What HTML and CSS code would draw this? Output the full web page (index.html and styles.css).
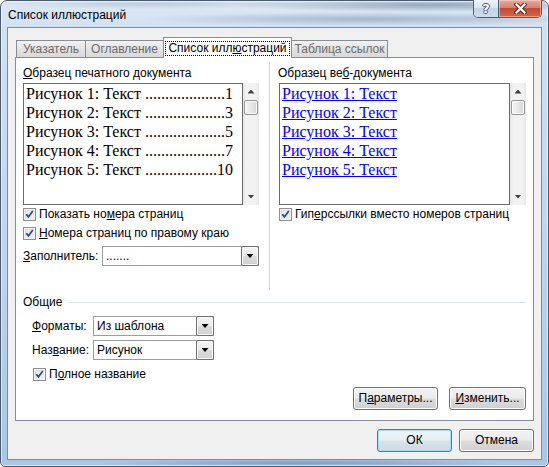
FILE: index.html
```html
<!DOCTYPE html>
<html lang="ru">
<head>
<meta charset="utf-8">
<title>Список иллюстраций</title>
<link rel="stylesheet" href="styles.css">
</head>
<body>
<div class="window">
  <div class="titlebar">
    <span class="title">Список иллюстраций</span>
    <div class="caption-btns">
      <div class="cap-help">?</div>
      <div class="cap-close">
        <svg width="13" height="11" viewBox="0 0 13 11"><path d="M2.5 1.5 L10.5 9.5 M10.5 1.5 L2.5 9.5" stroke="#5a2a22" stroke-width="4.2" stroke-linecap="square"/><path d="M2.5 1.5 L10.5 9.5 M10.5 1.5 L2.5 9.5" stroke="#ffffff" stroke-width="2.2" stroke-linecap="square"/></svg>
      </div>
    </div>
  </div>
  <div class="client">
    <div class="tabs">
      <div class="tab t1">Указатель</div>
      <div class="tab t2">Оглавление</div>
      <div class="tab t3 active"><span class="focus">Список илл<u>ю</u>страций</span></div>
      <div class="tab t4">Таблица ссылок</div>
    </div>
    <div class="panel">
      <div class="top">
        <div class="col left">
          <div class="lbl"><u>О</u>бразец печатного документа</div>
          <div class="preview">
            <div class="pbox print">
              <div class="line"><span>Рисунок 1: Текст</span><span class="dots">....................</span><span>1</span></div>
              <div class="line"><span>Рисунок 2: Текст</span><span class="dots">....................</span><span>3</span></div>
              <div class="line"><span>Рисунок 3: Текст</span><span class="dots">....................</span><span>5</span></div>
              <div class="line"><span>Рисунок 4: Текст</span><span class="dots">....................</span><span>7</span></div>
              <div class="line"><span>Рисунок 5: Текст</span><span class="dots">..................</span><span>10</span></div>
            </div>
            <div class="vscroll">
              <div class="sb-btn"><span class="arr-up"></span></div>
              <div class="thumb"></div>
              <div class="sb-space"></div>
              <div class="sb-btn"><span class="arr-down"></span></div>
            </div>
          </div>
          <div class="chk">
            <svg class="cb" width="13" height="13" viewBox="0 0 13 13"><rect x="0.5" y="0.5" width="12" height="12" fill="#f6f6f6" stroke="#8f8f8f"/><rect x="2" y="2" width="9" height="9" fill="#dcdcdc"/><rect x="3" y="3" width="8" height="8" fill="#ebebeb"/><path d="M3.3 6.3 L5.4 8.9 L9.8 2.9" stroke="#2f4389" stroke-width="1.7" fill="none"/></svg>
            <span>Показать но<u>м</u>ера страниц</span>
          </div>
          <div class="chk">
            <svg class="cb" width="13" height="13" viewBox="0 0 13 13"><rect x="0.5" y="0.5" width="12" height="12" fill="#f6f6f6" stroke="#8f8f8f"/><rect x="2" y="2" width="9" height="9" fill="#dcdcdc"/><rect x="3" y="3" width="8" height="8" fill="#ebebeb"/><path d="M3.3 6.3 L5.4 8.9 L9.8 2.9" stroke="#2f4389" stroke-width="1.7" fill="none"/></svg>
            <span><u>Н</u>омера страниц по правому краю</span>
          </div>
          <div class="field fill">
            <span class="flabel"><u>З</u>аполнитель:</span>
            <div class="combo wide"><span class="cval">.......</span><span class="drop"><span class="arr-down"></span></span></div>
          </div>
        </div>
        <div class="sep"></div>
        <div class="col right">
          <div class="lbl">Образец ве<u>б</u>-документа</div>
          <div class="preview shift">
            <div class="pbox web">
              <div class="line"><span class="link">Рисунок 1: Текст</span></div>
              <div class="line"><span class="link">Рисунок 2: Текст</span></div>
              <div class="line"><span class="link">Рисунок 3: Текст</span></div>
              <div class="line"><span class="link">Рисунок 4: Текст</span></div>
              <div class="line"><span class="link">Рисунок 5: Текст</span></div>
            </div>
            <div class="vscroll">
              <div class="sb-btn"><span class="arr-up"></span></div>
              <div class="thumb"></div>
              <div class="sb-space"></div>
              <div class="sb-btn"><span class="arr-down"></span></div>
            </div>
          </div>
          <div class="chk shift">
            <svg class="cb" width="13" height="13" viewBox="0 0 13 13"><rect x="0.5" y="0.5" width="12" height="12" fill="#f6f6f6" stroke="#8f8f8f"/><rect x="2" y="2" width="9" height="9" fill="#dcdcdc"/><rect x="3" y="3" width="8" height="8" fill="#ebebeb"/><path d="M3.3 6.3 L5.4 8.9 L9.8 2.9" stroke="#2f4389" stroke-width="1.7" fill="none"/></svg>
            <span>Гип<u>е</u>рссылки вместо номеров страниц</span>
          </div>
        </div>
      </div>
      <div class="group">
        <div class="ghead"><span>Общие</span><div class="gline"></div></div>
        <div class="gbody">
          <div class="field row1">
            <span class="flabel short"><u>Ф</u>орматы:</span>
            <div class="combo narrow"><span class="cval">Из шаблона</span><span class="drop"><span class="arr-down"></span></span></div>
          </div>
          <div class="field row2">
            <span class="flabel short">Наз<u>в</u>ание:</span>
            <div class="combo narrow"><span class="cval">Рисунок</span><span class="drop"><span class="arr-down"></span></span></div>
          </div>
          <div class="chk full">
            <svg class="cb" width="13" height="13" viewBox="0 0 13 13"><rect x="0.5" y="0.5" width="12" height="12" fill="#f6f6f6" stroke="#8f8f8f"/><rect x="2" y="2" width="9" height="9" fill="#dcdcdc"/><rect x="3" y="3" width="8" height="8" fill="#ebebeb"/><path d="M3.3 6.3 L5.4 8.9 L9.8 2.9" stroke="#2f4389" stroke-width="1.7" fill="none"/></svg>
            <span>П<u>о</u>лное название</span>
          </div>
        </div>
      </div>
      <div class="btnrow">
        <div class="btn b-param">П<u>а</u>раметры...</div>
        <div class="btn b-edit"><u>И</u>зменить...</div>
      </div>
    </div>
    <div class="dlgbtns">
      <div class="btn b-dlg default">ОК</div>
      <div class="btn b-dlg">Отмена</div>
    </div>
  </div>
</div>
</body>
</html>
```

FILE: styles.css
```css
* { box-sizing: border-box; }
html, body { margin: 0; padding: 0; }
body {
  width: 549px;
  height: 467px;
  overflow: hidden;
  font-family: "Liberation Sans", "Noto Sans", sans-serif;
  font-size: 12px;
  color: #000;
  background: #fff;
}
u { text-decoration: underline; text-underline-offset: 1px; }

.window {
  width: 549px;
  height: 467px;
  border: 1px solid #4a5a6e;
  border-radius: 7px 7px 5px 5px;
  padding: 0 6px 6px 6px;
  display: flex;
  flex-direction: column;
  box-shadow: inset 0 0 0 1px rgba(255,255,255,0.55);
  background:
    radial-gradient(ellipse 200px 7px at 430px 4px, rgba(70,90,120,0.45), rgba(70,90,120,0)),
    radial-gradient(ellipse 230px 7px at 370px 18px, rgba(70,90,120,0.32), rgba(70,90,120,0)),
    radial-gradient(ellipse 160px 5px at 150px 3px, rgba(90,110,140,0.22), rgba(90,110,140,0)),
    radial-gradient(ellipse 200px 4px at 300px 462px, rgba(40,80,140,0.35), rgba(40,80,140,0)),
    linear-gradient(180deg, #dde8f4 0px, #d2e1f1 26px, #bcd3eb 60%, #a9c6e6 100%);
}

.titlebar {
  height: 26px;
  display: flex;
  align-items: flex-start;
}
.title {
  margin-left: 1px;
  padding-top: 6px;
  line-height: 16px;
  flex: 1;
}
.caption-btns {
  margin-top: -1px;
  display: flex;
  height: 18px;
  border: 1px solid #4f5d70;
  border-top: none;
  border-radius: 0 0 5px 5px;
  overflow: hidden;
}
.cap-help {
  width: 25px;
  border-right: 1px solid #4f5d70;
  background: linear-gradient(180deg, #eef3f8 0%, #dbe5ef 45%, #c4d4e5 50%, #cfdcea 100%);
  color: #fff;
  font-family: "DejaVu Sans", sans-serif;
  font-weight: bold;
  font-size: 13px;
  line-height: 17px;
  text-align: center;
  text-shadow: 1px 0 0 #4a5566, -1px 0 0 #4a5566, 0 1px 0 #4a5566, 0 -1px 0 #4a5566;
}
.cap-close {
  width: 42px;
  display: flex;
  align-items: center;
  justify-content: center;
  background: linear-gradient(180deg, #e9ab9d 0%, #d8806c 45%, #c44a31 50%, #cf6a4e 100%);
  box-shadow: inset 0 0 0 1px rgba(255,220,210,0.5);
}

.client {
  height: 433px;
  border: 1px solid #808c9b;
  background: #f0f0f0;
  padding: 0 7px;
  display: flex;
  flex-direction: column;
}

/* tabs */
.tabs {
  height: 29px;
  padding-top: 9px;
  padding-left: 1px;
  display: flex;
  align-items: flex-end;
}
.tab {
  height: 17px;
  border: 1px solid #898c95;
  border-bottom: none;
  background: linear-gradient(180deg, #f2f2f2 0%, #e4e4e4 50%, #d9d9d9 100%);
  color: #6a6a6a;
  text-align: center;
  line-height: 15px;
  padding-top: 1px;
  white-space: nowrap;
}
.t1 { width: 70px; }
.t2 { width: 79px; margin-left: -1px; }
.t3 { width: 129px; margin-left: -1px; }
.t4 { width: 97px; margin-left: -1px; }
.tab.active {
  height: 21px;
  margin-bottom: -1px;
  background: #fff;
  color: #000;
  position: relative;
  z-index: 1;
  padding-top: 3px;
}
.focus {
  display: inline-block;
  border: 1px dotted #000;
  line-height: 13px;
  padding: 0 2px;
}

/* panel */
.panel {
  height: 364px;
  border: 1px solid #898c95;
  background: #fff;
  padding: 0 7px;
  display: flex;
  flex-direction: column;
}
.top {
  margin-top: 4px;
  height: 228px;
  display: flex;
}
.col { padding-top: 4px; }
.col.left { width: 236px; }
.col.right { width: 248px; }
.sep {
  width: 1px;
  background: #cfd6dd;
  margin: 0 8px 0 10px;
}
.lbl {
  line-height: 15px;
  height: 15px;
  white-space: nowrap;
}
.preview {
  margin-top: 2px;
  height: 122px;
  display: flex;
}
.preview.shift { margin-left: 1px; }
.pbox {
  border: 1px solid #6a6a6a;
  background: #fff;
  font-family: "Liberation Serif", "Times New Roman", serif;
  font-size: 16px;
  line-height: 19px;
  padding: 0 9px 0 2px;
}
.pbox.print { width: 220px; }
.pbox.web { width: 231px; }
.line {
  display: flex;
  white-space: nowrap;
}
.dots {
  flex: 1;
  text-align: right;
}
.link {
  color: #0000ff;
  text-decoration: underline;
}

/* scrollbar */
.vscroll {
  width: 16px;
  display: flex;
  flex-direction: column;
  background: linear-gradient(90deg, #e6e6e6 0%, #f2f2f2 20%, #f2f2f2 80%, #e6e6e6 100%);
}
.sb-btn {
  height: 17px;
  display: flex;
  align-items: center;
  justify-content: center;
}
.sb-space { flex: 1; }
.thumb {
  height: 15px;
  margin: 0 1px;
  border: 1px solid #979797;
  border-radius: 2px;
  background: linear-gradient(90deg, #f4f4f4 0%, #e8e8e8 50%, #d6d6d6 100%);
  box-shadow: inset 0 0 0 1px #fbfbfb;
}
.arr-up, .arr-down {
  display: block;
  width: 7px;
  height: 4px;
  background: #404040;
}
.arr-up { clip-path: polygon(50% 0, 100% 100%, 0 100%); }
.arr-down { clip-path: polygon(0 0, 100% 0, 50% 100%); }
.drop .arr-down { background: #000; }

/* checkboxes */
.chk {
  height: 19px;
  display: flex;
  align-items: center;
  white-space: nowrap;
}
.chk .cb { flex: none; margin-right: 3px; }
.chk.shift { margin-left: 1px; }
.chk span { line-height: 15px; }

/* fields */
.field {
  display: flex;
  align-items: center;
  height: 20px;
  white-space: nowrap;
}
.field.fill { margin-top: 3px; }
.flabel { width: 79px; }
.flabel.short { width: 61px; }
.combo {
  height: 20px;
  border: 1px solid #9a9da4;
  background: #fff;
  display: flex;
  align-items: center;
}
.combo.wide { width: 157px; }
.combo.narrow { width: 121px; }
.cval {
  flex: 1;
  padding-left: 3px;
  line-height: 15px;
}
.drop {
  width: 18px;
  height: 20px;
  margin: -1px -1px -1px 0;
  border: 1px solid #707070;
  border-radius: 2px;
  background: linear-gradient(180deg, #f4f4f4 0%, #ebebeb 48%, #dcdcdc 52%, #cfcfcf 100%);
  box-shadow: inset 0 0 0 1px #fafafa;
  display: flex;
  align-items: center;
  justify-content: center;
}

/* group */
.group { margin-top: 5px; }
.ghead {
  height: 15px;
  display: flex;
  align-items: center;
}
.ghead span { line-height: 15px; }
.gline {
  flex: 1;
  height: 1px;
  margin-left: 6px;
  background: #d5dfe5;
}
.gbody { padding-left: 9px; }
.row1 { margin-top: 6px; }
.row2 { margin-top: 4px; }
.chk.full { margin-top: 5px; margin-left: 1px; }

/* buttons */
.btn {
  height: 23px;
  border: 1px solid #707070;
  border-radius: 3px;
  background: linear-gradient(180deg, #f2f2f2 0%, #ebebeb 49%, #dddddd 51%, #cfcfcf 100%);
  box-shadow: inset 0 0 0 1px #fcfcfc;
  text-align: center;
  line-height: 20px;
  white-space: nowrap;
}
.btnrow {
  margin-top: 3px;
  display: flex;
  justify-content: flex-end;
  gap: 11px;
}
.b-param { width: 85px; }
.b-edit { width: 77px; }
.dlgbtns {
  margin-top: 8px;
  display: flex;
  justify-content: flex-end;
  gap: 7px;
}
.b-dlg { width: 75px; }
.btn.default {
  border-color: #3c7fb1;
  box-shadow: inset 0 0 0 1px #a6dcf5;
  background: linear-gradient(180deg, #f0f4f7 0%, #e8eef2 49%, #d9e3ea 51%, #ccd9e2 100%);
}
```
